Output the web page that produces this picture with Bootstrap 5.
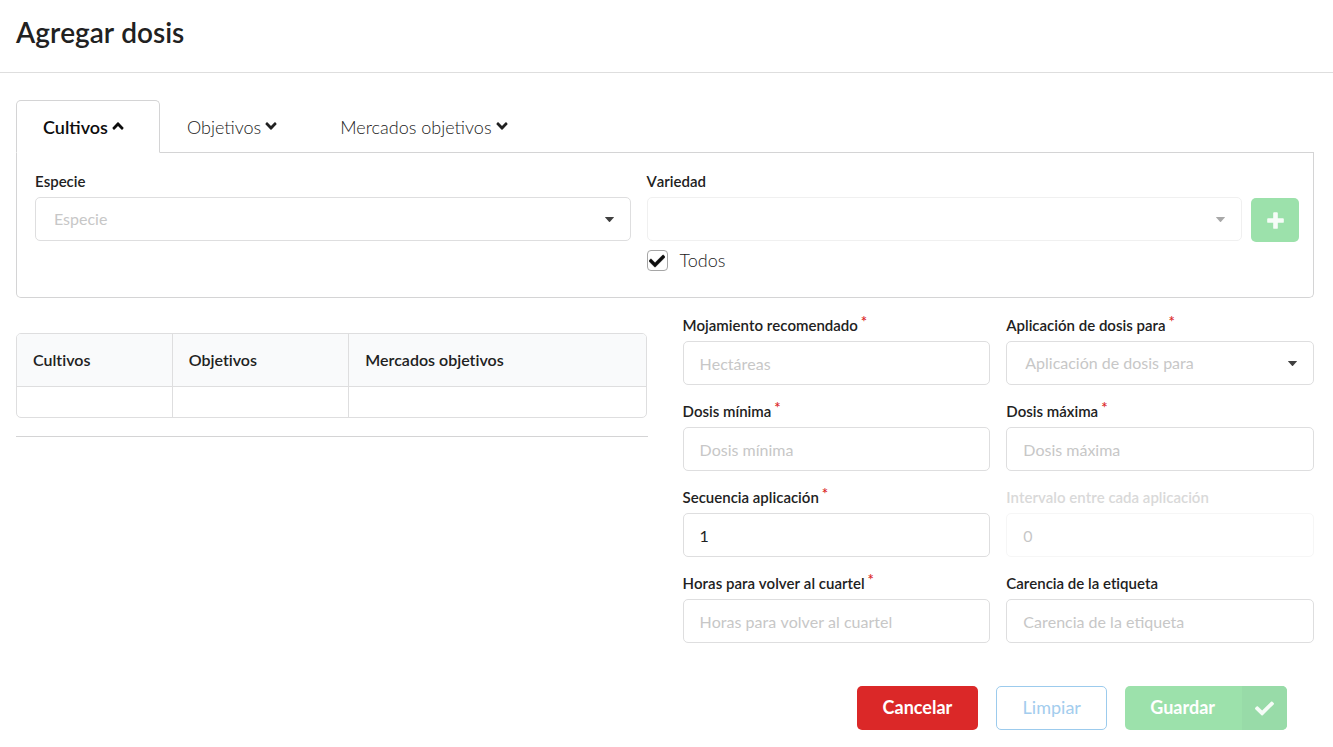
<!DOCTYPE html>
<html lang="es">
<head>
<meta charset="utf-8">
<meta name="viewport" content="width=device-width, initial-scale=1">
<title>Agregar dosis</title>
<link href="https://cdn.jsdelivr.net/npm/bootstrap@5.3.0/dist/css/bootstrap.min.css" rel="stylesheet">
<style>
  body { font-family: Lato, "Liberation Sans", sans-serif; font-size: 18px; font-weight: 300; color: #212121; font-variant-ligatures: none; }
  .page-title { font-size: 28px; line-height: 36px; font-weight: 600; font-kerning: none; padding: 14px 16px 22px; border-bottom: 1px solid #dedede; }
  .page-body { padding: 27px 19px 16px 16px; }

  .dose-tabs { border-bottom-color: #d4d4d5; }
  .dose-tabs .nav-link { height: 53px; padding: 2px 35px 0 26px; color: #212121; border-radius: 5px 5px 0 0; display: flex; align-items: center; gap: 4px; }
  .dose-tabs .nav-link:not(.active):hover { border-color: transparent; }
  .dose-tabs .nav-link.active { color: #0d0d0d; font-weight: 600; border-color: #d4d4d5 #d4d4d5 #fff; }
  .dose-tabs svg { width: 12px; height: 18px; margin-bottom: 4px; }
  .crop-panel { border: 1px solid #d4d4d5; border-top: 0; border-radius: 0 0 5px 5px; padding: 19px 14px 26px 18px; }

  .form-label { font-size: 15px; line-height: 18px; font-weight: 600; font-kerning: none; margin-bottom: 7px; display: block; }
  .required::after { content: "*"; color: #db2828; font-weight: 600; margin-left: 3px; vertical-align: 4px; line-height: 0; }
  .form-control, .form-select { height: 44px; font-size: 16px; font-weight: 400; line-height: 22px; border-color: #dededf; border-radius: 5px; padding: 0 16px; color: #212121; }
  .form-control { font-kerning: none; }
  .form-control::placeholder { color: #c7c7c7; }
  .form-select { padding: 0 36px 0 18px; color: #c7c7c7; background-size: 9px 5px; background-position: right 16px center;
    background-image: url("data:image/svg+xml,%3Csvg xmlns='http://www.w3.org/2000/svg' viewBox='0 0 9 5'%3E%3Cpath fill='%23404040' d='M.5 0h8q.8 0 .3.6L5 4.7q-.5.5-1 0L.2.6Q-.3 0 .5 0z'/%3E%3C/svg%3E"); }
  .form-control:disabled, .form-select:disabled { background-color: #fff; opacity: .45; }
  .field-off .form-label { color: #d9d9d9; }
  .field-off .form-control:disabled { opacity: .25; }

  .todos-check { min-height: 21px; gap: 12px; margin-top: 9px; line-height: 21px; }
  .todos-check .form-check-input { width: 21px; height: 21px; margin: 0; border: 1px solid #a6a6a6; border-radius: 4px; }
  .todos-check .form-check-input:checked { background-color: #fff; background-size: 16px 16px;
    background-image: url("data:image/svg+xml,%3Csvg xmlns='http://www.w3.org/2000/svg' viewBox='0 0 512 512'%3E%3Cpath fill='%230d0d0d' stroke='%230d0d0d' stroke-width='16' d='M173.898 439.404l-166.4-166.4c-9.997-9.997-9.997-26.206 0-36.204l36.203-36.204c9.997-9.998 26.207-9.998 36.204 0L192 312.69 432.095 72.596c9.997-9.997 26.207-9.997 36.204 0l36.203 36.204c9.997 9.997 9.997 26.206 0 36.204l-294.4 294.401c-9.998 9.997-26.207 9.997-36.204-.001z'/%3E%3C/svg%3E"); }

  .halves { display: grid; grid-template-columns: 1fr 1fr; column-gap: 35px; }
  .table-frame { border: 1px solid #dededf; border-radius: 5px; margin: 35px 1px 0 0; overflow: hidden; }
  .dose-table { margin: 0; font-size: 16px; table-layout: fixed; color: #212121; }
  .dose-table th { background: #f9fafb; font-weight: 600; height: 52px; padding: 0 16px; vertical-align: middle; line-height: 22px; }
  .dose-table td { height: 31px; padding: 0; border-bottom: 0; }
  .dose-table > :not(caption) > * > * { border-color: #dededf; }
  .dose-table th + th, .dose-table td + td { border-left: 1px solid #dededf; }
  .table-rule { margin: 18px 0 0; border-top: 1px solid #d4d4d5; opacity: 1; }

  .dose-fields { display: grid; grid-template-columns: 1fr 1fr; gap: 17px 16px; margin-top: 18px; }
  .actions { gap: 18px; padding-right: 27px; margin-top: 43px; }
  .btn { height: 44px; border-radius: 5px; font-size: 18px; line-height: 24px; padding: 0 25px 2px; }
  .btn-cancel, .btn-cancel:hover { background: #db2828; color: #fff; font-weight: 700; }
  .btn-clear { min-width: 111px; }
  .btn-clear:disabled { border: 1px solid #9ccbed; color: #a3cdee; font-weight: 400; opacity: 1; }
  .btn-add:disabled, .btn-save:disabled { background: #9ce1ab; color: #fff; border: 0; opacity: 1; }
  .btn-add { width: 48px; padding: 0; margin: 26px 0 0 9px; }
  .btn-save { padding: 0; font-weight: 700; overflow: hidden; }
  .btn-save .save-text { padding: 0 27px 2px 25px; }
  .btn-save .save-icon { width: 45px; background: #98dba8; }
</style>
</head>
<body>
<header><h1 class="page-title m-0">Agregar dosis</h1></header>
<main class="page-body">
  <ul class="nav nav-tabs dose-tabs" role="tablist">
    <li class="nav-item"><button type="button" role="tab" aria-selected="true" class="nav-link active">Cultivos <svg viewBox="0 0 320 512" fill="currentColor" aria-hidden="true"><path d="M177 159.7l136 136c9.4 9.4 9.4 24.6 0 33.9l-22.6 22.6c-9.4 9.4-24.6 9.4-33.9 0L160 255.9l-96.4 96.4c-9.4 9.4-24.6 9.4-33.9 0L7 329.7c-9.4-9.4-9.4-24.6 0-33.9l136-136c9.4-9.5 24.6-9.5 34-.1z"/></svg></button></li>
    <li class="nav-item"><button type="button" role="tab" aria-selected="false" class="nav-link">Objetivos <svg viewBox="0 0 320 512" fill="currentColor" aria-hidden="true"><path d="M143 352.3L7 216.3c-9.4-9.4-9.4-24.6 0-33.9l22.6-22.6c9.4-9.4 24.6-9.4 33.9 0l96.4 96.4 96.4-96.4c9.4-9.4 24.6-9.4 33.9 0l22.6 22.6c9.4 9.4 9.4 24.6 0 33.9l-136 136c-9.2 9.4-24.4 9.4-33.8 0z"/></svg></button></li>
    <li class="nav-item"><button type="button" role="tab" aria-selected="false" class="nav-link">Mercados objetivos <svg viewBox="0 0 320 512" fill="currentColor" aria-hidden="true"><path d="M143 352.3L7 216.3c-9.4-9.4-9.4-24.6 0-33.9l22.6-22.6c9.4-9.4 24.6-9.4 33.9 0l96.4 96.4 96.4-96.4c9.4-9.4 24.6-9.4 33.9 0l22.6 22.6c9.4 9.4 9.4 24.6 0 33.9l-136 136c-9.2 9.4-24.4 9.4-33.8 0z"/></svg></button></li>
  </ul>
  <section class="crop-panel d-flex align-items-start">
    <div class="d-flex flex-fill gap-3">
      <div class="w-50">
        <label class="form-label" for="especie">Especie</label>
        <select class="form-select" id="especie"><option>Especie</option></select>
      </div>
      <div class="w-50">
        <label class="form-label" for="variedad">Variedad</label>
        <select class="form-select" id="variedad" disabled><option></option></select>
        <div class="todos-check d-flex align-items-center">
          <input class="form-check-input" type="checkbox" id="todos" checked>
          <label for="todos">Todos</label>
        </div>
      </div>
    </div>
    <button type="button" class="btn btn-add d-flex align-items-center justify-content-center" aria-label="Agregar" disabled><svg width="17" height="19" viewBox="0 0 448 512" fill="#f5fcf7" aria-hidden="true"><path d="M448 294.2v-76.4c0-13.3-10.7-24-24-24H286.2V56c0-13.3-10.7-24-24-24h-76.4c-13.3 0-24 10.7-24 24v137.8H24c-13.3 0-24 10.7-24 24v76.4c0 13.3 10.7 24 24 24h137.8V456c0 13.3 10.7 24 24 24h76.4c13.3 0 24-10.7 24-24V318.2H424c13.3 0 24-10.7 24-24z"/></svg></button>
  </section>

  <div class="halves">
    <section>
      <div class="table-frame">
        <table class="table dose-table">
          <colgroup><col style="width:24.7%"><col style="width:28.1%"><col></colgroup>
          <thead><tr><th scope="col">Cultivos</th><th scope="col">Objetivos</th><th scope="col">Mercados objetivos</th></tr></thead>
          <tbody><tr><td></td><td></td><td></td></tr></tbody>
        </table>
      </div>
      <hr class="table-rule">
    </section>
    <form class="dose-fields">
      <div><label class="form-label required" for="mojamiento">Mojamiento recomendado</label><input class="form-control" id="mojamiento" placeholder="Hectáreas"></div>
      <div><label class="form-label required" for="aplicacion">Aplicación de dosis para</label><select class="form-select" id="aplicacion"><option>Aplicación de dosis para</option></select></div>
      <div><label class="form-label required" for="minima">Dosis mínima</label><input class="form-control" id="minima" placeholder="Dosis mínima"></div>
      <div><label class="form-label required" for="maxima">Dosis máxima</label><input class="form-control" id="maxima" placeholder="Dosis máxima"></div>
      <div><label class="form-label required" for="secuencia">Secuencia aplicación</label><input class="form-control" id="secuencia" value="1"></div>
      <div class="field-off"><label class="form-label" for="intervalo">Intervalo entre cada aplicación</label><input class="form-control" id="intervalo" value="0" disabled></div>
      <div><label class="form-label required" for="horas">Horas para volver al cuartel</label><input class="form-control" id="horas" placeholder="Horas para volver al cuartel"></div>
      <div><label class="form-label" for="carencia">Carencia de la etiqueta</label><input class="form-control" id="carencia" placeholder="Carencia de la etiqueta"></div>
    </form>
  </div>

  <div class="actions d-flex justify-content-end">
    <button type="button" class="btn btn-cancel">Cancelar</button>
    <button type="button" class="btn btn-clear" disabled>Limpiar</button>
    <button type="button" class="btn btn-save d-flex align-items-stretch" disabled>
      <span class="save-text align-self-center">Guardar</span>
      <span class="save-icon d-flex align-items-center justify-content-center"><svg width="19" height="19" viewBox="0 0 512 512" fill="#f5fcf7" aria-hidden="true"><path d="M173.898 439.404l-166.4-166.4c-9.997-9.997-9.997-26.206 0-36.204l36.203-36.204c9.997-9.998 26.207-9.998 36.204 0L192 312.69 432.095 72.596c9.997-9.997 26.207-9.997 36.204 0l36.203 36.204c9.997 9.997 9.997 26.206 0 36.204l-294.4 294.401c-9.998 9.997-26.207 9.997-36.204-.001z"/></svg></span>
    </button>
  </div>
</main>
<script src="https://cdn.jsdelivr.net/npm/bootstrap@5.3.0/dist/js/bootstrap.bundle.min.js"></script>
</body>
</html>
